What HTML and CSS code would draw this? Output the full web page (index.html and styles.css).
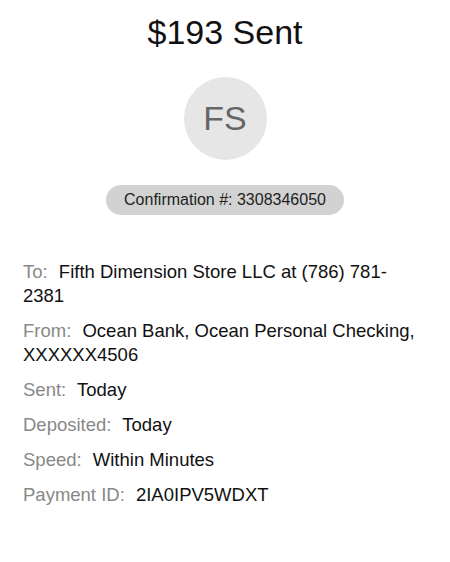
FILE: index.html
```html
<!DOCTYPE html>
<html lang="en">
  <head>
    <meta charset="UTF-8" />
    <meta name="viewport" content="width=device-width, initial-scale=1.0" />
    <title>Payment Sent</title>
    <link rel="stylesheet" href="styles.css">
  </head>
  <body>
    <div class="receipt">
      <h1 class="title">$193 Sent</h1>
      <div class="avatar">FS</div>
      <div class="confirm">Confirmation #: 3308346050</div>

      <div class="details">
        <p class="row"><span class="label">To:</span> Fifth Dimension Store LLC at (786) 781-<wbr>2381</p>
        <p class="row"><span class="label">From:</span> Ocean Bank, Ocean Personal Checking, XXXXXX4506</p>
        <p class="row"><span class="label">Sent:</span> Today</p>
        <p class="row"><span class="label">Deposited:</span> Today</p>
        <p class="row"><span class="label">Speed:</span> Within Minutes</p>
        <p class="row"><span class="label">Payment ID:</span> 2IA0IPV5WDXT</p>
      </div>
    </div>
  </body>
</html>
```

FILE: styles.css
```css
body {
  margin: 0;
  background-color: #fff;
  font-family: "Liberation Sans", Arial, sans-serif;
  color: #111;
}
.receipt {
  display: flex;
  flex-direction: column;
  align-items: center;
  padding-top: 12px;
}
.title {
  margin: 0;
  font-size: 34px;
  font-weight: normal;
  line-height: 40px;
}
.avatar {
  width: 83px;
  height: 83px;
  margin-top: 25px;
  border-radius: 50%;
  background-color: #e6e6e6;
  color: #666;
  font-size: 34px;
  display: flex;
  align-items: center;
  justify-content: center;
}
.confirm {
  margin-top: 25px;
  width: 238px;
  height: 30px;
  border-radius: 15px;
  background-color: #d2d2d2;
  color: #222;
  font-size: 16px;
  display: flex;
  align-items: center;
  justify-content: center;
}
.details {
  align-self: stretch;
  padding: 0 30px 0 23px;
  margin-top: 45px;
}
.row {
  margin: 0 0 11px;
  font-size: 18.5px;
  line-height: 24px;
}
.label {
  color: #888;
  margin-right: 6px;
}
```
